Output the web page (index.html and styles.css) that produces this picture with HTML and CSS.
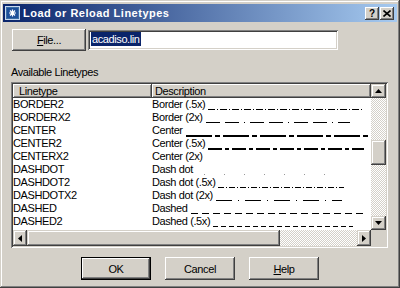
FILE: index.html
```html
<!DOCTYPE html>
<html lang="en">
<head>
    <meta charset="UTF-8">
    <title>Load or Reload Linetypes</title>
    <link rel="stylesheet" href="styles.css">
</head>
<body>
    <div class="window">
        <div class="titlebar">
            <svg class="app-icon" width="15" height="14" viewBox="0 0 15 14">
                <rect x="0.5" y="0.5" width="14" height="13" fill="#3a6ea5" stroke="#c8d8f0"/>
                <rect x="2" y="2" width="11" height="10" fill="#1d4f9a"/>
                <path d="M7.5 3.5v7M4 7h7M5 4.5l5 5M10 4.5l-5 5" stroke="#fff" stroke-width="1.2"/>
            </svg>
            <span class="title">Load or Reload Linetypes</span>
            <div class="caption-btn">?</div>
            <div class="caption-btn close">
                <svg width="8" height="7" viewBox="0 0 8 7"><path d="M0.5 0.5l7 6M7.5 0.5l-7 6" stroke="#000" stroke-width="1.6"/></svg>
            </div>
        </div>

        <div class="content">
            <div class="file-row">
                <div class="btn file-btn"><u>F</u>ile...</div>
                <div class="field"><span class="sel">acadiso.lin</span></div>
            </div>

            <div class="label">Available Linetypes</div>

            <div class="list">
                <div class="view">
                    <div class="header">
                        <div class="hcell c1">Linetype</div>
                        <div class="hcell c2">Description</div>
                    </div>
                    <div class="row">
                        <div class="c1">BORDER2</div>
                        <div class="c2"><span>Border (.5x)</span>
                            <svg class="lt" width="160" height="13"><line x1="0" y1="11.5" x2="155" y2="11.5" stroke="#000" stroke-dasharray="7 2 1 2"/></svg></div>
                    </div>
                    <div class="row">
                        <div class="c1">BORDERX2</div>
                        <div class="c2"><span>Border (2x)</span>
                            <svg class="lt" width="160" height="13"><line x1="0" y1="11.5" x2="144" y2="11.5" stroke="#000" stroke-dasharray="14 5 14 5 1 5"/></svg></div>
                    </div>
                    <div class="row">
                        <div class="c1">CENTER</div>
                        <div class="c2"><span>Center</span>
                            <svg class="lt" width="190" height="13"><line x1="0" y1="12" x2="188" y2="12" stroke="#000" stroke-width="2" stroke-dasharray="26 3 5 3"/></svg></div>
                    </div>
                    <div class="row">
                        <div class="c1">CENTER2</div>
                        <div class="c2"><span>Center (.5x)</span>
                            <svg class="lt" width="160" height="13"><line x1="0" y1="12" x2="156" y2="12" stroke="#000" stroke-width="2" stroke-dasharray="14 3 4 3"/></svg></div>
                    </div>
                    <div class="row">
                        <div class="c1">CENTERX2</div>
                        <div class="c2"><span>Center (2x)</span></div>
                    </div>
                    <div class="row">
                        <div class="c1">DASHDOT</div>
                        <div class="c2"><span>Dash dot</span>
                            <svg class="lt" width="160" height="13"><line x1="8" y1="11.5" x2="140" y2="11.5" stroke="#999" stroke-dasharray="1 19"/></svg></div>
                    </div>
                    <div class="row">
                        <div class="c1">DASHDOT2</div>
                        <div class="c2"><span>Dash dot (.5x)</span>
                            <svg class="lt" width="160" height="13"><line x1="0" y1="11.5" x2="126" y2="11.5" stroke="#000" stroke-dasharray="6 2 1 2"/></svg></div>
                    </div>
                    <div class="row">
                        <div class="c1">DASHDOTX2</div>
                        <div class="c2"><span>Dash dot (2x)</span>
                            <svg class="lt" width="160" height="13"><line x1="0" y1="11.5" x2="126" y2="11.5" stroke="#000" stroke-dasharray="16 6 1 6"/></svg></div>
                    </div>
                    <div class="row">
                        <div class="c1">DASHED</div>
                        <div class="c2"><span>Dashed</span>
                            <svg class="lt" width="180" height="13"><line x1="0" y1="11.5" x2="176" y2="11.5" stroke="#000" stroke-dasharray="7 4"/></svg></div>
                    </div>
                    <div class="row">
                        <div class="c1">DASHED2</div>
                        <div class="c2"><span>Dashed (.5x)</span>
                            <svg class="lt" width="160" height="13"><line x1="0" y1="11.5" x2="140" y2="11.5" stroke="#000" stroke-dasharray="5 3"/></svg></div>
                    </div>
                </div>

                <div class="vscroll">
                    <div class="sbtn"><svg width="7" height="4" viewBox="0 0 7 4"><path d="M3.5 0L7 4H0z" fill="#000"/></svg></div>
                    <div class="track vtrack-a"></div>
                    <div class="thumb vthumb"></div>
                    <div class="track"></div>
                    <div class="sbtn"><svg width="7" height="4" viewBox="0 0 7 4"><path d="M0 0h7L3.5 4z" fill="#000"/></svg></div>
                </div>

                <div class="hscroll">
                    <div class="sbtn"><svg width="4" height="7" viewBox="0 0 4 7"><path d="M0 3.5L4 0v7z" fill="#000"/></svg></div>
                    <div class="thumb hthumb"></div>
                    <div class="track"></div>
                    <div class="sbtn"><svg width="4" height="7" viewBox="0 0 4 7"><path d="M4 3.5L0 0v7z" fill="#000"/></svg></div>
                </div>

                <div class="corner"></div>
            </div>

            <div class="buttons">
                <div class="btn default">OK</div>
                <div class="btn">Cancel</div>
                <div class="btn"><u>H</u>elp</div>
            </div>
        </div>
    </div>
</body>
</html>
```

FILE: styles.css
```css
body {
    margin: 0;
    font-family: "Liberation Sans", Arial, sans-serif;
    font-size: 11px;
    letter-spacing: -0.4px;
    color: #000000;
    background-color: #d4d0c8;
}
.window {
    width: 400px;
    height: 288px;
    box-sizing: border-box;
    padding: 4px 3px 3px 3px;
    background-color: #d4d0c8;
    box-shadow: inset -1px -1px #404040, inset 1px 1px #d4d0c8, inset -2px -2px #808080, inset 2px 2px #ffffff;
}
.titlebar {
    height: 18px;
    display: flex;
    align-items: center;
    padding: 0 3px 0 2px;
    background: linear-gradient(to right, #0a246a, #a6caf0);
}
.app-icon {
    flex: none;
    margin-right: 3px;
}
.title {
    flex: 1;
    color: #ffffff;
    font-weight: bold;
    font-size: 11px;
    letter-spacing: 0.5px;
}
.caption-btn {
    width: 14px;
    height: 13px;
    margin-left: 1px;
    display: flex;
    align-items: center;
    justify-content: center;
    background-color: #d4d0c8;
    font-weight: bold;
    font-size: 10px;
    letter-spacing: 0;
    box-shadow: inset -1px -1px #404040, inset 1px 1px #ffffff, inset -2px -2px #808080;
}
.content {
    padding: 7px 8px 0 8px;
}
.file-row {
    display: flex;
    align-items: center;
    padding-left: 1px;
}
.btn {
    height: 23px;
    display: flex;
    align-items: center;
    justify-content: center;
    background-color: #d4d0c8;
    box-shadow: inset -1px -1px #404040, inset 1px 1px #ffffff, inset -2px -2px #808080, inset 2px 2px #d4d0c8;
}
.file-btn {
    width: 74px;
    height: 22px;
}
.field {
    width: 250px;
    height: 20px;
    margin-left: 2px;
    box-sizing: border-box;
    padding: 2px 3px;
    background-color: #ffffff;
    box-shadow: inset 1px 1px #808080, inset -1px -1px #ffffff, inset 2px 2px #404040, inset -2px -2px #d4d0c8;
}
.sel {
    display: inline-block;
    height: 14px;
    line-height: 14px;
    padding: 0 1px;
    background-color: #0a246a;
    color: #ffffff;
}
.label {
    margin-top: 15px;
    line-height: 13px;
}
.list {
    width: 377px;
    height: 166px;
    margin-top: 3px;
    box-sizing: border-box;
    padding: 2px;
    display: grid;
    grid-template-columns: 1fr 15px;
    grid-template-rows: 146px 16px;
    background-color: #ffffff;
    box-shadow: inset 1px 1px #808080, inset -1px -1px #ffffff, inset 2px 2px #404040, inset -2px -2px #d4d0c8;
}
.view {
    overflow: hidden;
}
.header {
    display: grid;
    grid-template-columns: 139px 1fr;
    height: 14px;
}
.hcell {
    background-color: #d4d0c8;
    line-height: 14px;
    box-shadow: inset -1px -1px #404040, inset 1px 1px #ffffff, inset -2px -2px #808080;
}
.hcell.c1 {
    padding-left: 6px;
}
.hcell.c2 {
    padding-left: 3px;
}
.row {
    display: grid;
    grid-template-columns: 139px 1fr;
    height: 13px;
    line-height: 13px;
}
.row .c2 {
    display: flex;
    white-space: nowrap;
    overflow: hidden;
}
.lt {
    flex: none;
    margin-left: 3px;
}
.vscroll {
    display: flex;
    flex-direction: column;
}
.hscroll {
    display: flex;
}
.sbtn {
    flex: none;
    width: 15px;
    height: 14px;
    display: flex;
    align-items: center;
    justify-content: center;
    background-color: #d4d0c8;
    box-shadow: inset -1px -1px #404040, inset 1px 1px #d4d0c8, inset -2px -2px #808080, inset 2px 2px #ffffff;
}
.hscroll .sbtn {
    width: 14px;
    height: 16px;
}
.track {
    flex: 1;
    background: repeating-conic-gradient(#d4d0c8 0 25%, #ffffff 0 50%) 0 0 / 2px 2px;
}
.vtrack-a {
    flex: none;
    height: 42px;
}
.thumb {
    flex: none;
    background-color: #d4d0c8;
    box-shadow: inset -1px -1px #404040, inset 1px 1px #d4d0c8, inset -2px -2px #808080, inset 2px 2px #ffffff;
}
.vthumb {
    height: 25px;
}
.hthumb {
    width: 253px;
}
.corner {
    background-color: #d4d0c8;
}
.buttons {
    display: flex;
    justify-content: center;
    gap: 14px;
    margin-top: 9px;
}
.buttons .btn {
    width: 70px;
}
.btn.default {
    box-shadow: inset -1px -1px #000000, inset 1px 1px #000000, inset -2px -2px #404040, inset 2px 2px #ffffff, inset -3px -3px #808080;
}
```
